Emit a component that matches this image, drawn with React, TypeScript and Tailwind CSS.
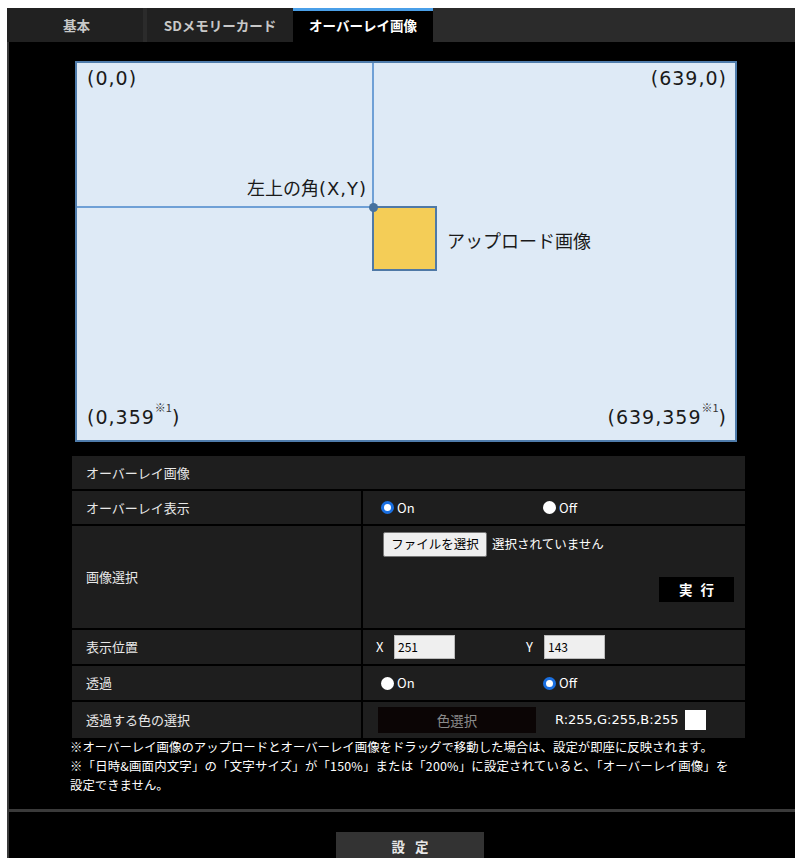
import React from "react";

const F = "font-['Noto_Sans_CJK_JP','Noto_Sans',sans-serif]";
const L = "font-['DejaVu_Sans','Noto_Sans_CJK_JP',sans-serif] tracking-[1px]";

function Radio({ checked }: { checked: boolean }) {
  return checked ? (
    <span className="inline-block w-[13px] h-[13px] rounded-full bg-white border-[3px] border-[#1a6fe0] box-border" />
  ) : (
    <span className="inline-block w-[13px] h-[13px] rounded-full bg-white" />
  );
}

function RadioPair({ on }: { on: boolean }) {
  return (
    <div className="flex items-center h-full pl-[18px] text-white text-[13px]">
      <div className="flex items-center gap-[3px] w-[162px]">
        <Radio checked={on} />
        <span>On</span>
      </div>
      <div className="flex items-center gap-[3px]">
        <Radio checked={!on} />
        <span>Off</span>
      </div>
    </div>
  );
}

function Row({ label, h, children }: { label: string; h: string; children: React.ReactNode }) {
  return (
    <div className={`grid grid-cols-[289px_1fr] gap-[2px] ${h}`}>
      <div className="bg-[#1e1e1e] flex items-center pl-[14px] text-[13px] text-[#e8e8e8]">{label}</div>
      <div className="bg-[#1e1e1e] relative">{children}</div>
    </div>
  );
}

function Sup() {
  return <sup className="text-[11px] tracking-normal align-[7px] text-[#333] font-['Noto_Sans_CJK_JP',sans-serif]">※1</sup>;
}

export default function App() {
  return (
    <div className={`${F} bg-white w-[795px] h-[858px] pt-[8px] pl-[7px] overflow-hidden`}>
      <div className="bg-black h-full flex flex-col">
        {/* Tabs */}
        <div className="h-[34px] flex bg-[#2b2b2b] shrink-0">
          <div className="w-[136px] bg-[#212121] flex items-center justify-center text-[13.5px] font-bold text-[#c8c8c8] pl-[3px]">基本</div>
          <div className="w-[4px]" />
          <div className="w-[146px] bg-[#212121] flex items-center justify-center text-[13.5px] font-bold text-[#c8c8c8]">SDメモリーカード</div>
          <div className="w-[140px] bg-black border-t-[3px] border-[#4a9fe8] flex items-center justify-center text-[13.5px] font-bold text-white pb-[2px]">オーバーレイ画像</div>
        </div>
        {/* Content */}
        <div className="flex-1 border-l-2 border-[#3a3a3a] flex flex-col">
          {/* Diagram */}
          <div className="ml-[66px] mt-[19px] w-[662px] h-[381px] border-2 border-[#4f7cab] bg-[#deeaf6] relative text-[#1a1a1a] text-[18px] leading-[24px] shrink-0">
            <div className="absolute left-[295px] top-0 w-[2px] h-[144px] bg-[#6fa0d6]" />
            <div className="absolute left-0 top-[143px] w-[296px] h-[2px] bg-[#6fa0d6]" />
            <div className="absolute left-[295px] top-[143px] w-[65px] h-[65px] border-2 border-[#4f79a6] bg-[#f4cd57]" />
            <div className="absolute left-[292px] top-[140px] w-[9px] h-[9px] rounded-full bg-[#46729f]" />
            <div className="absolute right-[368px] top-[112px] whitespace-nowrap">
              左上の角<span className={`${L} text-[18px]`}>(X,Y)</span>
            </div>
            <div className="absolute left-[370px] top-[165px]">アップロード画像</div>
            <div className={`absolute left-[10px] top-[3px] ${L} text-[19px]`}>(0,0)</div>
            <div className={`absolute right-[8px] top-[3px] ${L} text-[19px]`}>(639,0)</div>
            <div className={`absolute left-[10px] top-[342px] ${L} text-[19px] whitespace-nowrap`}>
              (0,359<Sup />)
            </div>
            <div className={`absolute right-[8px] top-[342px] ${L} text-[19px] whitespace-nowrap`}>
              (639,359<Sup />)
            </div>
          </div>

          {/* Table */}
          <div className="ml-[63px] mt-[14px] w-[673px] flex flex-col gap-[2px] shrink-0">
            <div className="h-[33px] bg-[#1e1e1e] flex items-center pl-[14px] text-[13px] text-[#e8e8e8]">オーバーレイ画像</div>
            <Row label="オーバーレイ表示" h="h-[33px]">
              <RadioPair on={true} />
            </Row>
            <Row label="画像選択" h="h-[102px]">
              <div className="absolute left-[20px] top-[6px] flex items-center">
                <div className="h-[25px] w-[104px] bg-[#efefef] border border-[#767676] rounded-[2px] flex items-center justify-center text-[12.5px] text-black">ファイルを選択</div>
                <span className="ml-[5px] text-[12.5px] text-white">選択されていません</span>
              </div>
              <div className="absolute right-[11px] top-[51px] w-[75px] h-[25px] bg-black flex items-center justify-center text-[13.5px] font-bold text-white tracking-[8px] pl-[8px]">実行</div>
            </Row>
            <Row label="表示位置" h="h-[34px]">
              <div className="flex items-center h-full pl-[13px] text-white text-[13px]">
                <span className="w-[18px]">X</span>
                <div className="w-[61px] h-[24px] bg-[#efefef] border border-[#bbb] flex items-center pl-[3px] text-[12px] text-black">251</div>
                <span className="ml-[71px] w-[18px]">Y</span>
                <div className="w-[61px] h-[24px] bg-[#efefef] border border-[#bbb] flex items-center pl-[3px] text-[12px] text-black">143</div>
              </div>
            </Row>
            <Row label="透過" h="h-[34px]">
              <RadioPair on={false} />
            </Row>
            <Row label="透過する色の選択" h="h-[36px]">
              <div className="flex items-center h-full pl-[15px]">
                <div className="w-[158px] h-[26px] bg-[#0b0505] flex items-center justify-center text-[13.5px] text-[#8a8a8a]">色選択</div>
                <span className="ml-[19px] text-[13px] text-white font-['DejaVu_Sans',sans-serif]">R:255,G:255,B:255</span>
                <div className="ml-[7px] w-[21px] h-[20px] bg-white" />
              </div>
            </Row>
          </div>

          {/* Notes */}
          <div className="ml-[61px] text-[12.4px] leading-[19px] text-white whitespace-nowrap shrink-0">
            <div>※オーバーレイ画像のアップロードとオーバーレイ画像をドラッグで移動した場合は、設定が即座に反映されます。</div>
            <div className="tracking-[0.2px]">※「日時&amp;画面内文字」の「文字サイズ」が「150%」または「200%」に設定されていると、「オーバーレイ画像」を</div>
            <div>設定できません。</div>
          </div>

          <div className="mt-[14px] h-[3px] bg-[#3a3a3a] shrink-0" />

          <div className="ml-[327px] mt-[20px] w-[148px] h-[30px] bg-[#333] flex items-start justify-center pt-[4px] text-[13.5px] font-bold text-[#e8e8e8] tracking-[10px] pl-[10px] shrink-0">設定</div>
        </div>
      </div>
    </div>
  );
}
